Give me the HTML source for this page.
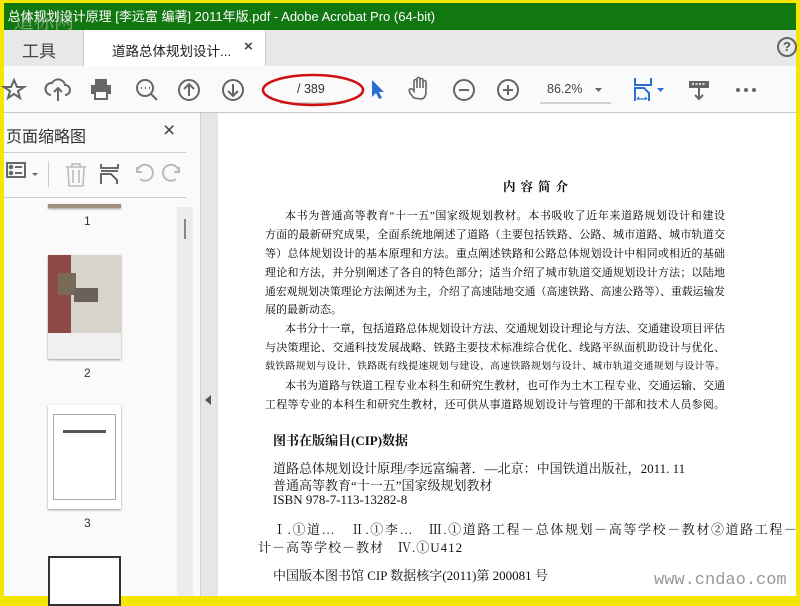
<!DOCTYPE html>
<html><head><meta charset="utf-8"><style>
*{margin:0;padding:0;box-sizing:border-box}
body{width:800px;height:600px;overflow:hidden;background:#f4e600;position:relative;font-family:"Liberation Sans","Noto Sans CJK SC",sans-serif}
.a{position:absolute}
#title{left:4px;top:3px;width:792px;height:27px;background:#117711;color:#fff;font-size:13px;line-height:27px;white-space:nowrap;overflow:hidden}
#tabs{left:4px;top:30px;width:792px;height:36px;background:#e8e8e8}
#tool{left:4px;top:66px;width:792px;height:47px;background:#fafafa;border-bottom:1px solid #c8c8c8}
#panel{left:4px;top:113px;width:196px;height:483px;background:#fafafa}
#strip{left:200px;top:113px;width:18px;height:483px;background:#e6e6e6;border-left:1px solid #d0d0d0}
#doc{left:218px;top:113px;width:578px;height:483px;background:#fff;overflow:hidden}
.ln{position:absolute;left:47px;width:460px;height:17px;overflow:hidden;font-family:"Liberation Serif","Noto Serif CJK SC",serif;font-size:11px;line-height:16px;color:#000;text-align:justify;text-align-last:justify}
.c{position:absolute;font-family:"Liberation Serif","Noto Serif CJK SC",serif;font-size:13px;color:#111;white-space:nowrap}
svg{position:absolute}
</style></head><body>
<div class="a" id="title">&nbsp;总体规划设计原理 [李远富 编著] 2011年版.pdf - Adobe Acrobat Pro (64-bit)</div>
<div class="a" style="left:14px;top:5px;color:rgba(200,200,200,.6);font-size:20px;font-family:'Noto Serif CJK SC',serif">道标网</div>
<div class="a" id="tabs">
 <div class="a" style="left:18px;top:7px;font-size:17px;color:#444">工具</div>
 <div class="a" style="left:79px;top:0;width:183px;height:36px;background:#fff;border-left:1px solid #ccc;border-right:1px solid #ccc"></div>
 <div class="a" style="left:108px;top:10px;font-size:13.5px;color:#222">道路总体规划设计...</div>
 <div class="a" style="left:240px;top:8px;font-size:15px;color:#444;font-weight:bold">×</div>
 <div class="a" style="left:773px;top:7px;width:20px;height:20px;border:2px solid #666;border-radius:50%;font-size:13px;font-weight:bold;color:#555;text-align:center;line-height:16px">?</div>
</div>
<div class="a" id="tool"></div>
<svg width="800" height="115" style="left:0;top:0" fill="none" stroke="#666" stroke-width="2">
 <path d="M14 80l3 7h7l-6 4 2 7-6-4-6 4 2-7-6-4h7z"/>
 <path d="M51 95a6 6 0 0 1 1-12a7 7 0 0 1 13 2a5 5 0 0 1 0 10M58 101v-12M54 92l4-4 4 4"/>
 <rect x="91" y="85" width="20" height="9" fill="#666" stroke="none"/><rect x="95" y="79" width="12" height="6" fill="#666" stroke="none"/><rect x="95" y="91" width="12" height="8" fill="#fafafa" stroke="#666"/>
 <circle cx="145" cy="88" r="8"/><path d="M151 94l6 6"/><path d="M141 88h1M145 88h1M149 88h1" stroke-width="2"/>
 <circle cx="189" cy="90" r="10"/><path d="M189 96v-12M184 89l5-5 5 5"/>
 <circle cx="233" cy="90" r="10"/><path d="M233 84v12M228 91l5 5 5-5"/>
 <path d="M280 103h65" stroke="#aaa" stroke-width="1"/>
 <ellipse cx="313" cy="90" rx="50" ry="15" stroke="#d01010" stroke-width="2.5"/>
 <path d="M372 80l0 17 4-4 3 6 3-1-3-6 5 0z" fill="#2a6fcf" stroke="none"/>
 <path d="M414 98c-4-4-6-8-4-9 2-1 4 2 4 2v-10a1.5 1.5 0 0 1 3 0v7-9a1.5 1.5 0 0 1 3 0v9-8a1.5 1.5 0 0 1 3 0v8-6a1.5 1.5 0 0 1 3 0v10c0 4-2 7-5 7z" stroke-width="1.6"/>
 <circle cx="464" cy="90" r="10"/><path d="M459 90h10"/>
 <circle cx="508" cy="90" r="10"/><path d="M503 90h10M508 85v10"/>
 <path d="M540 103h71" stroke="#aaa" stroke-width="1"/>
 <path d="M595 88h7l-3.5 4z" fill="#666" stroke="none"/>
 <path d="M635 78v7h16v-7M635 101v-13h9l5 5v8" stroke="#2a6fcf"/><path d="M637 99h10M637 99l2-2M647 99l-2-2" stroke="#2a6fcf" stroke-width="1.2"/>
 <path d="M657 88h7l-3.5 4z" fill="#2a6fcf" stroke="none"/>
 <rect x="689" y="81" width="20" height="7" fill="#666" stroke="none"/><path d="M692 84h14" stroke="#fff" stroke-dasharray="2 1.5" stroke-width="1.5"/><path d="M699 88v11M695 95l4 4 4-4"/>
 <circle cx="738" cy="90" r="2" fill="#666" stroke="none"/><circle cx="746" cy="90" r="2" fill="#666" stroke="none"/><circle cx="754" cy="90" r="2" fill="#666" stroke="none"/>
</svg>
<div class="a" style="left:297px;top:82px;font-size:12.5px;color:#333">/ 389</div>
<div class="a" style="left:547px;top:82px;font-size:12.5px;color:#444">86.2%</div>
<div class="a" id="panel">
 <div class="a" style="left:2px;top:10px;font-size:16px;color:#333">页面缩略图</div>
 <div class="a" style="left:159px;top:6px;font-size:21px;color:#444">×</div>
 <div class="a" style="left:0;top:39px;width:182px;height:1px;background:#ccc"></div>
 <div class="a" style="left:0;top:84px;width:182px;height:1px;background:#ccc"></div>
 <div class="a" style="left:44px;top:48px;width:1px;height:26px;background:#ccc"></div>
 <div class="a" style="left:173px;top:94px;width:16px;height:389px;background:#ececec"></div>
 <div class="a" style="left:180px;top:106px;width:2px;height:20px;background:#888"></div>
 <div class="a" style="left:44px;top:91px;width:73px;height:4px;background:#a0907f;box-shadow:0 1px 2px #999"></div>
 <div class="a" style="left:80px;top:101px;font-size:12px;color:#333">1</div>
 <div class="a" style="left:44px;top:142px;width:73px;height:104px;background:#d8d4cc;box-shadow:0 1px 2px #999"><div class="a" style="left:0;top:0;width:23px;height:78px;background:#8d4b45"></div><div class="a" style="left:0;top:78px;width:73px;height:26px;background:#f0f0f0"></div><div class="a" style="left:10px;top:18px;width:18px;height:22px;background:#7a6a5a"></div><div class="a" style="left:26px;top:33px;width:24px;height:14px;background:#6a625a"></div></div>
 <div class="a" style="left:80px;top:253px;font-size:12px;color:#333">2</div>
 <div class="a" style="left:44px;top:292px;width:73px;height:104px;background:#fff;box-shadow:0 1px 2px #999"><div class="a" style="left:5px;top:9px;width:63px;height:86px;border:1px solid #aaa"></div><div class="a" style="left:15px;top:25px;width:43px;height:3px;background:#555"></div></div>
 <div class="a" style="left:80px;top:403px;font-size:12px;color:#333">3</div>
 <div class="a" style="left:44px;top:443px;width:73px;height:50px;background:#fff;border:2px solid #333"></div>
</div>
<svg width="200" height="200" style="left:0;top:113px" fill="none" stroke="#666" stroke-width="2">
 <rect x="7" y="50" width="18" height="14"/><circle cx="11" cy="54" r="1.3" fill="#666"/><circle cx="11" cy="60" r="1.3" fill="#666"/><path d="M15 54h7M15 60h7"/>
 <path d="M32 60h6l-3 3z" fill="#666" stroke="none"/>
 <path d="M66 54h20M72 54v-3h8v3M68 54l1 19h14l1-19M73 57v13M79 57v13" stroke="#bbb" stroke-width="1.6"/>
 <path d="M101 51v4h17v-4M101 58h17M101 71v-10h10l6 6v4" stroke="#555" stroke-width="1.8"/>
 <path d="M140 66a8 8 0 1 0 -3-7M137 54v5h5" stroke="#bbb"/>
 <path d="M176 66a8 8 0 1 1 3-7M179 54v5h-5" stroke="#bbb"/>
</svg>
<div class="a" id="strip"></div>
<div class="a" style="left:205px;top:395px;border-right:6px solid #555;border-top:5px solid transparent;border-bottom:5px solid transparent"></div>
<div class="a" id="doc">
 <div class="c" style="left:285px;top:64px;font-size:12.5px;font-weight:bold;letter-spacing:5px">内容简介</div>
 <div class="ln" style="top:95px;left:67px;width:440px">本书为普通高等教育“十一五”国家级规划教材。本书吸收了近年来道路规划设计和建设</div>
 <div class="ln" style="top:114px">方面的最新研究成果，全面系统地阐述了道路（主要包括铁路、公路、城市道路、城市轨道交通</div>
 <div class="ln" style="top:133px">等）总体规划设计的基本原理和方法。重点阐述铁路和公路总体规划设计中相同或相近的基础</div>
 <div class="ln" style="top:152px">理论和方法，并分别阐述了各自的特色部分；适当介绍了城市轨道交通规划设计方法；以陆地交</div>
 <div class="ln" style="top:171px;font-size:10.7px">通宏观规划决策理论方法阐述为主，介绍了高速陆地交通（高速铁路、高速公路等）、重载运输发</div>
 <div class="ln" style="top:189px;text-align-last:left">展的最新动态。</div>
 <div class="ln" style="top:208px;left:67px;width:440px">本书分十一章，包括道路总体规划设计方法、交通规划设计理论与方法、交通建设项目评估</div>
 <div class="ln" style="top:227px">与决策理论、交通科技发展战略、铁路主要技术标准综合优化、线路平纵面机助设计与优化、重</div>
 <div class="ln" style="top:246px;font-size:9.9px">载铁路规划与设计、铁路既有线提速规划与建设、高速铁路规划与设计、城市轨道交通规划与设计等。</div>
 <div class="ln" style="top:265px;left:67px;width:440px">本书为道路与铁道工程专业本科生和研究生教材，也可作为土木工程专业、交通运输、交通</div>
 <div class="ln" style="top:284px">工程等专业的本科生和研究生教材，还可供从事道路规划设计与管理的干部和技术人员参阅。</div>
 <div class="c" style="left:55px;top:317px;font-weight:bold;font-size:13px">图书在版编目(CIP)数据</div>
 <div class="c" style="left:55px;top:345px">道路总体规划设计原理/李远富编著．—北京：中国铁道出版社，2011. 11</div>
 <div class="c" style="left:55px;top:362px">普通高等教育“十一五”国家级规划教材</div>
 <div class="c" style="left:55px;top:379px">ISBN 978-7-113-13282-8</div>
 <div class="c" style="left:55px;top:406px;letter-spacing:1.6px">Ⅰ.①道…　Ⅱ.①李…　Ⅲ.①道路工程－总体规划－高等学校－教材②道路工程－</div>
 <div class="c" style="left:40px;top:424px;letter-spacing:1px">计－高等学校－教材　Ⅳ.①U412</div>
 <div class="c" style="left:55px;top:452px">中国版本图书馆 CIP 数据核字(2011)第 200081 号</div>
 <div class="c" style="left:436px;top:458px;font-size:17px;color:#999;font-family:'Liberation Mono',monospace">www.cndao.com</div>
</div>
</body></html>
